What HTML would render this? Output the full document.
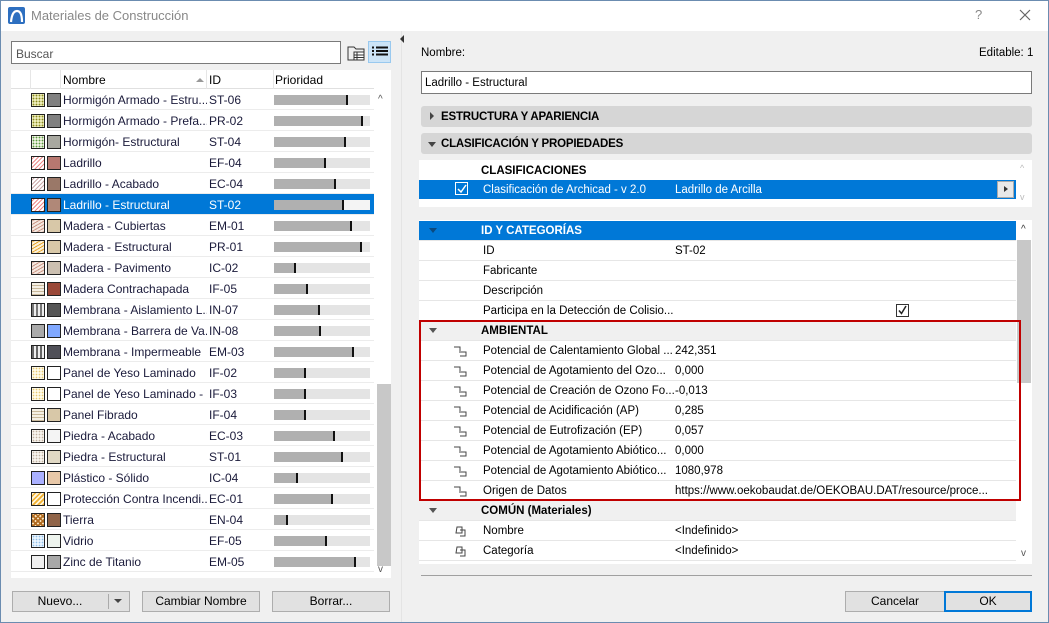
<!DOCTYPE html>
<html><head><meta charset="utf-8"><style>
*{box-sizing:border-box;margin:0;padding:0}
body{width:1049px;height:623px;overflow:hidden;background:#f0f0f0;font-family:"Liberation Sans",sans-serif;font-size:12px;color:#000;position:relative}
.a{position:absolute}
#frame{position:absolute;left:0;top:0;width:1049px;height:623px;border:1px solid #6b8cb0;pointer-events:none}
#title{position:absolute;left:0;top:0;width:1049px;height:31px;background:#fff}
#list{position:absolute;left:11px;top:70px;width:380px;height:508px;background:#fff}
.r{position:absolute;left:0;width:363px;height:21px;border-bottom:1px solid #ececec;color:#1a1a3a}
.r i{position:absolute;top:4px;width:14px;height:14px;border:1px solid #222}
.r i.p{left:20px}.r i.c{left:36px}
.r .n{position:absolute;left:52px;top:4px;white-space:nowrap;width:144px;overflow:hidden}
.r .id{position:absolute;left:198px;top:4px}
.r .bar{position:absolute;left:263px;top:6px;width:96px;height:10px;background:#e4e4e4}
.r .bar b{display:block;height:10px;background:#b0b0b0;border-right:2px solid #111}
.r.sel{background:#0078d7;color:#fff}
.r.sel .bar{background:#f4f4f4}
.btn{position:absolute;height:21px;border:1px solid #adadad;background:#e1e1e1;text-align:center;line-height:19px}
.sec{position:absolute;left:421px;width:611px;height:21px;background:#d6d6d6;border-radius:3px;font-weight:bold;font-size:11.5px;line-height:23px;padding-left:20px;letter-spacing:-.2px}
.pr{position:absolute;left:0;width:597px;height:20px;border-bottom:1px solid #e6e6e6;line-height:21px;white-space:nowrap;font-size:11.5px}
.pr .l{position:absolute;left:64px}
.pr .v{position:absolute;left:256px}
.pr.h{background:#f0f0f0;font-weight:bold}
.pr.h .l{left:62px}
.tri{position:absolute;left:10px;top:7px;width:0;height:0;border-left:4px solid transparent;border-right:4px solid transparent;border-top:5px solid #555}
.ic{position:absolute;left:34px;top:5px}
.dot{background-size:3px 3px}
</style></head><body>
<div id="title">
<svg class="a" style="left:8px;top:7px" width="17" height="17" viewBox="0 0 17 17"><rect width="17" height="17" rx="2" fill="#2d6fc0"/><path d="M3 15 Q4 4 9 4 Q14 4 14 15" stroke="#fff" stroke-width="2.2" fill="none"/></svg>
<div class="a" style="left:31px;top:8px;font-size:13px;color:#888">Materiales de Construcción</div>
<div class="a" style="left:975px;top:7px;font-size:13px;color:#888">?</div>
<svg class="a" style="left:1019px;top:9px" width="12" height="12"><path d="M1 1L11 11M11 1L1 11" stroke="#666" stroke-width="1.2"/></svg>
</div>
<div class="a" style="left:11px;top:41px;width:330px;height:23px;border:1px solid #7a7a7a;background:#fff;padding:5px 0 0 4px;color:#555">Buscar</div>
<svg class="a" style="left:347px;top:44px" width="19" height="18"><path d="M1 3h6l2 2h8v11H1z" fill="none" stroke="#333"/><rect x="7" y="8" width="10" height="8" fill="#fff" stroke="#333"/><path d="M7 11h10M7 13.5h10M10 8v8" stroke="#333"/></svg>
<div class="a" style="left:368px;top:41px;width:23px;height:22px;background:#cce4f7;border:1px solid #99c9ef"></div>
<svg class="a" style="left:372px;top:46px" width="16" height="12"><path d="M0 1.5h2M4 1.5h12M0 5h2M4 5h12M0 8.5h2M4 8.5h12" stroke="#111" stroke-width="2"/></svg>
<div id="list">
<div class="a" style="left:0;top:0;width:363px;height:19px;border-bottom:1px solid #e0e0e0"></div>
<div class="a" style="left:19px;top:0;height:19px;border-left:1px solid #e6e6e6"></div>
<div class="a" style="left:49px;top:0;height:19px;border-left:1px solid #e6e6e6"></div>
<div class="a" style="left:195px;top:0;height:19px;border-left:1px solid #e6e6e6"></div>
<div class="a" style="left:262px;top:0;height:19px;border-left:1px solid #e6e6e6"></div>
<div class="a" style="left:52px;top:3px">Nombre</div>
<div class="a" style="left:185px;top:8px;border-left:4px solid transparent;border-right:4px solid transparent;border-bottom:4px solid #999"></div>
<div class="a" style="left:198px;top:3px">ID</div>
<div class="a" style="left:264px;top:3px">Prioridad</div>
<div class="a" style="left:363px;top:19px;width:17px;height:489px;background:#fff"></div>
<div class="a" style="left:366px;top:314px;width:14px;height:182px;background:#c8c8c8"></div>
<div class="a" style="left:367px;top:24px;font-size:10px;color:#555">^</div>
<div class="a" style="left:367px;top:494px;font-size:10px;color:#555">v</div>
<div class="a" style="left:0;top:19px;width:363px;height:489px">
<div class="r" style="top:0"><i class="p dot" style="background:radial-gradient(circle,#8a8a20 0.7px,#ececb8 1px);background-size:3px 3px"></i><i class="c" style="background:#808080"></i><span class="n">Hormigón Armado - Estru...</span><span class="id">ST-06</span><span class="bar"><b style="width:74px"></b></span></div>
<div class="r" style="top:21px"><i class="p" style="background:radial-gradient(circle,#8a8a20 0.7px,#ececb8 1px);background-size:3px 3px"></i><i class="c" style="background:#808080"></i><span class="n">Hormigón Armado - Prefa...</span><span class="id">PR-02</span><span class="bar"><b style="width:89px"></b></span></div>
<div class="r" style="top:42px"><i class="p" style="background:radial-gradient(circle,#5a9a40 0.7px,#eef2e0 1px);background-size:3px 3px"></i><i class="c" style="background:#a8a8a0"></i><span class="n">Hormigón- Estructural</span><span class="id">ST-04</span><span class="bar"><b style="width:72px"></b></span></div>
<div class="r" style="top:63px"><i class="p" style="background:repeating-linear-gradient(-45deg,#e88 0 1px,#fff 1px 3px)"></i><i class="c" style="background:#b87870"></i><span class="n">Ladrillo</span><span class="id">EF-04</span><span class="bar"><b style="width:52px"></b></span></div>
<div class="r" style="top:84px"><i class="p" style="background:repeating-linear-gradient(-45deg,#caa 0 1px,#fff 1px 3px)"></i><i class="c" style="background:#9a7868"></i><span class="n">Ladrillo - Acabado</span><span class="id">EC-04</span><span class="bar"><b style="width:62px"></b></span></div>
<div class="r sel" style="top:105px"><i class="p" style="background:repeating-linear-gradient(-45deg,#e88 0 1px,#fff 1px 3px)"></i><i class="c" style="background:#b08878"></i><span class="n">Ladrillo - Estructural</span><span class="id">ST-02</span><span class="bar"><b style="width:70px"></b></span></div>
<div class="r" style="top:126px"><i class="p" style="background:repeating-linear-gradient(-30deg,#c98 0 1px,#f5e8e0 1px 3px)"></i><i class="c" style="background:#d8c8a8"></i><span class="n">Madera - Cubiertas</span><span class="id">EM-01</span><span class="bar"><b style="width:78px"></b></span></div>
<div class="r" style="top:147px"><i class="p" style="background:repeating-linear-gradient(-30deg,#e8a830 0 1px,#fbf0d8 1px 3px)"></i><i class="c" style="background:#d8c8a8"></i><span class="n">Madera - Estructural</span><span class="id">PR-01</span><span class="bar"><b style="width:88px"></b></span></div>
<div class="r" style="top:168px"><i class="p" style="background:repeating-linear-gradient(-30deg,#c98 0 1px,#f5e8e0 1px 3px)"></i><i class="c" style="background:#cbbfb0"></i><span class="n">Madera - Pavimento</span><span class="id">IC-02</span><span class="bar"><b style="width:22px"></b></span></div>
<div class="r" style="top:189px"><i class="p" style="background:repeating-linear-gradient(0deg,#c8b89a 0 1px,#f4efe4 1px 3px)"></i><i class="c" style="background:#9a4838"></i><span class="n">Madera Contrachapada</span><span class="id">IF-05</span><span class="bar"><b style="width:34px"></b></span></div>
<div class="r" style="top:210px"><i class="p" style="background:repeating-linear-gradient(90deg,#777 0 2px,#eee 2px 4px)"></i><i class="c" style="background:#555"></i><span class="n">Membrana - Aislamiento L...</span><span class="id">IN-07</span><span class="bar"><b style="width:46px"></b></span></div>
<div class="r" style="top:231px"><i class="p" style="background:#aaa"></i><i class="c" style="background:#80a8ff"></i><span class="n">Membrana - Barrera de Va...</span><span class="id">IN-08</span><span class="bar"><b style="width:47px"></b></span></div>
<div class="r" style="top:252px"><i class="p" style="background:repeating-linear-gradient(90deg,#666 0 2px,#eee 2px 4px)"></i><i class="c" style="background:#505058"></i><span class="n">Membrana - Impermeable</span><span class="id">EM-03</span><span class="bar"><b style="width:80px"></b></span></div>
<div class="r" style="top:273px"><i class="p" style="background:radial-gradient(circle,#e8c870 0.6px,#fffbe8 1px);background-size:3px 3px"></i><i class="c" style="background:#fff"></i><span class="n">Panel de Yeso Laminado</span><span class="id">IF-02</span><span class="bar"><b style="width:32px"></b></span></div>
<div class="r" style="top:294px"><i class="p" style="background:radial-gradient(circle,#e8c870 0.6px,#fffbe8 1px);background-size:3px 3px"></i><i class="c" style="background:#fff"></i><span class="n">Panel de Yeso Laminado - ...</span><span class="id">IF-03</span><span class="bar"><b style="width:32px"></b></span></div>
<div class="r" style="top:315px"><i class="p" style="background:repeating-linear-gradient(0deg,#c8b89a 0 1px,#f4efe4 1px 3px)"></i><i class="c" style="background:#d8c8a8"></i><span class="n">Panel Fibrado</span><span class="id">IF-04</span><span class="bar"><b style="width:32px"></b></span></div>
<div class="r" style="top:336px"><i class="p" style="background:radial-gradient(circle,#c0b0a0 0.6px,#f6f2ec 1px);background-size:3px 3px"></i><i class="c" style="background:#f4f4f4"></i><span class="n">Piedra - Acabado</span><span class="id">EC-03</span><span class="bar"><b style="width:61px"></b></span></div>
<div class="r" style="top:357px"><i class="p" style="background:radial-gradient(circle,#c0b0a0 0.6px,#f6f2ec 1px);background-size:3px 3px"></i><i class="c" style="background:#e0d8c4"></i><span class="n">Piedra - Estructural</span><span class="id">ST-01</span><span class="bar"><b style="width:69px"></b></span></div>
<div class="r" style="top:378px"><i class="p" style="background:#aab0ff"></i><i class="c" style="background:#e8c8a8"></i><span class="n">Plástico - Sólido</span><span class="id">IC-04</span><span class="bar"><b style="width:24px"></b></span></div>
<div class="r" style="top:399px"><i class="p" style="background:repeating-linear-gradient(-45deg,#f0b030 0 1.5px,#fff4d8 1.5px 3.5px)"></i><i class="c" style="background:#fff"></i><span class="n">Protección Contra Incendi...</span><span class="id">EC-01</span><span class="bar"><b style="width:59px"></b></span></div>
<div class="r" style="top:420px"><i class="p" style="background:repeating-linear-gradient(45deg,#b06a20 0 1.5px,transparent 1.5px 3.5px),repeating-linear-gradient(-45deg,#b06a20 0 1.5px,#f8e0b8 1.5px 3.5px)"></i><i class="c" style="background:#906448"></i><span class="n">Tierra</span><span class="id">EN-04</span><span class="bar"><b style="width:14px"></b></span></div>
<div class="r" style="top:441px"><i class="p" style="background:radial-gradient(circle,#90c0e8 0.6px,#e8f4ff 1px);background-size:3px 3px"></i><i class="c" style="background:#eef4ee"></i><span class="n">Vidrio</span><span class="id">EF-05</span><span class="bar"><b style="width:53px"></b></span></div>
<div class="r" style="top:462px"><i class="p" style="background:#f0f0f0"></i><i class="c" style="background:#a8a8a8"></i><span class="n">Zinc de Titanio</span><span class="id">EM-05</span><span class="bar"><b style="width:82px"></b></span></div>
</div>
</div>
<div class="btn" style="left:12px;top:591px;width:118px;padding-right:22px">Nuevo...</div>
<div class="a" style="left:108px;top:594px;height:15px;border-left:1px solid #aaa"></div>
<div class="a" style="left:114px;top:599px;border-left:4px solid transparent;border-right:4px solid transparent;border-top:4px solid #444"></div>
<div class="btn" style="left:142px;top:591px;width:118px">Cambiar Nombre</div>
<div class="btn" style="left:272px;top:591px;width:118px">Borrar...</div>
<div class="a" style="left:401px;top:31px;width:1px;height:591px;background:#e4e4e4"></div>
<div class="a" style="left:400px;top:35px;border-top:4px solid transparent;border-bottom:4px solid transparent;border-right:4px solid #333"></div>
<div class="a" style="left:421px;top:47px;font-size:11.5px">Nombre:</div>
<div class="a" style="left:979px;top:47px;font-size:11.5px">Editable: 1</div>
<div class="a" style="left:421px;top:71px;width:611px;height:23px;border:1px solid #7a7a7a;background:#fff;padding:5px 0 0 3px;font-size:11.5px">Ladrillo - Estructural</div>
<div class="sec" style="top:106px">ESTRUCTURA Y APARIENCIA</div>
<div class="a" style="left:430px;top:112px;border-top:4px solid transparent;border-bottom:4px solid transparent;border-left:4px solid #444"></div>
<div class="sec" style="top:133px">CLASIFICACIÓN Y PROPIEDADES</div>
<div class="a" style="left:428px;top:142px;border-left:4px solid transparent;border-right:4px solid transparent;border-top:5px solid #444"></div>
<div class="a" style="left:419px;top:160px;width:613px;height:47px;background:#fff"></div>
<div class="a" style="left:481px;top:165px;font-weight:bold;font-size:11.5px">CLASIFICACIONES</div>
<div class="a" style="left:419px;top:180px;width:597px;height:19px;background:#0078d7;color:#fff;font-size:11.5px;line-height:21px">
<div class="a" style="left:36px;top:2px;width:13px;height:13px;border:1px solid #fff;background:#0078d7"></div>
<svg class="a" style="left:37px;top:3px" width="12" height="12"><path d="M2 6l3 3 5-7" stroke="#fff" stroke-width="1.5" fill="none"/></svg>
<span class="a" style="left:64px">Clasificación de Archicad - v 2.0</span><span class="a" style="left:256px">Ladrillo de Arcilla</span>
<div class="a" style="left:578px;top:1px;width:17px;height:17px;background:#e8e8e8;border:1px solid #aaa"></div>
<div class="a" style="left:585px;top:6px;border-top:3.5px solid transparent;border-bottom:3.5px solid transparent;border-left:4px solid #333"></div>
</div>
<div class="a" style="left:1020px;top:163px;font-size:9px;color:#bbb">^</div>
<div class="a" style="left:1020px;top:192px;font-size:9px;color:#bbb">v</div>
<div class="a" style="left:419px;top:213px;width:613px;height:7px;background:#f0f0f0"></div>
<div class="a" style="left:419px;top:220px;width:613px;height:344px;background:#fff">
<div class="a" style="left:598px;top:20px;width:14px;height:323px;background:#c8c8c8"></div>
<div class="a" style="left:598px;top:163px;width:14px;height:180px;background:#fff"></div>
<div class="a" style="left:602px;top:4px;font-size:10px;color:#333">^</div>
<div class="a" style="left:602px;top:328px;font-size:10px;color:#555">v</div>
<div class="pr" style="top:1px;background:#0078d7;color:#fff;font-weight:bold"><span class="tri" style="border-top-color:#0a4a80"></span><span class="l" style="left:62px">ID Y CATEGORÍAS</span></div>
<div class="pr" style="top:21px"><span class="l">ID</span><span class="v">ST-02</span></div>
<div class="pr" style="top:41px"><span class="l">Fabricante</span></div>
<div class="pr" style="top:61px"><span class="l">Descripción</span></div>
<div class="pr" style="top:81px"><span class="l">Participa en la Detección de Colisio...</span><svg class="a" style="left:477px;top:3px" width="13" height="13"><rect x=".5" y=".5" width="12" height="12" fill="#fff" stroke="#333"/><path d="M3 6.5l2.5 3L10 2" stroke="#222" stroke-width="1.5" fill="none"/></svg></div>
<div class="pr h" style="top:101px"><span class="tri"></span><span class="l">AMBIENTAL</span></div>
<div class="pr" style="top:121px"><svg class="ic" width="16" height="11"><path d="M1 1h6v4M6 6h7v4h-6" stroke="#444" fill="none"/></svg><span class="l">Potencial de Calentamiento Global ...</span><span class="v">242,351</span></div>
<div class="pr" style="top:141px"><svg class="ic" width="16" height="11"><path d="M1 1h6v4M6 6h7v4h-6" stroke="#444" fill="none"/></svg><span class="l">Potencial de Agotamiento del Ozo...</span><span class="v">0,000</span></div>
<div class="pr" style="top:161px"><svg class="ic" width="16" height="11"><path d="M1 1h6v4M6 6h7v4h-6" stroke="#444" fill="none"/></svg><span class="l">Potencial de Creación de Ozono Fo...</span><span class="v">-0,013</span></div>
<div class="pr" style="top:181px"><svg class="ic" width="16" height="11"><path d="M1 1h6v4M6 6h7v4h-6" stroke="#444" fill="none"/></svg><span class="l">Potencial de Acidificación (AP)</span><span class="v">0,285</span></div>
<div class="pr" style="top:201px"><svg class="ic" width="16" height="11"><path d="M1 1h6v4M6 6h7v4h-6" stroke="#444" fill="none"/></svg><span class="l">Potencial de Eutrofización (EP)</span><span class="v">0,057</span></div>
<div class="pr" style="top:221px"><svg class="ic" width="16" height="11"><path d="M1 1h6v4M6 6h7v4h-6" stroke="#444" fill="none"/></svg><span class="l">Potencial de Agotamiento Abiótico...</span><span class="v">0,000</span></div>
<div class="pr" style="top:241px"><svg class="ic" width="16" height="11"><path d="M1 1h6v4M6 6h7v4h-6" stroke="#444" fill="none"/></svg><span class="l">Potencial de Agotamiento Abiótico...</span><span class="v">1080,978</span></div>
<div class="pr" style="top:261px"><svg class="ic" width="16" height="11"><path d="M1 1h6v4M6 6h7v4h-6" stroke="#444" fill="none"/></svg><span class="l">Origen de Datos</span><span class="v">https://www.oekobaudat.de/OEKOBAU.DAT/resource/proce...</span></div>
<div class="pr h" style="top:281px"><span class="tri"></span><span class="l">COMÚN (Materiales)</span></div>
<div class="pr" style="top:301px"><svg class="ic" width="16" height="11"><path d="M4 1h5v6h-6zM7 4h5v6h-5" stroke="#444" fill="none"/></svg><span class="l">Nombre</span><span class="v">&lt;Indefinido&gt;</span></div>
<div class="pr" style="top:321px"><svg class="ic" width="16" height="11"><path d="M4 1h5v6h-6zM7 4h5v6h-5" stroke="#444" fill="none"/></svg><span class="l">Categoría</span><span class="v">&lt;Indefinido&gt;</span></div>
</div>
<div class="a" style="left:419px;top:320px;width:602px;height:181px;border:2px solid #c00000"></div>
<div class="a" style="left:421px;top:575px;width:611px;height:1px;background:#a0a0a0"></div>
<div class="btn" style="left:845px;top:591px;width:100px">Cancelar</div>
<div class="btn" style="left:944px;top:591px;width:88px;border:2px solid #0078d7;line-height:17px">OK</div>
<div id="frame"></div>
</body></html>
